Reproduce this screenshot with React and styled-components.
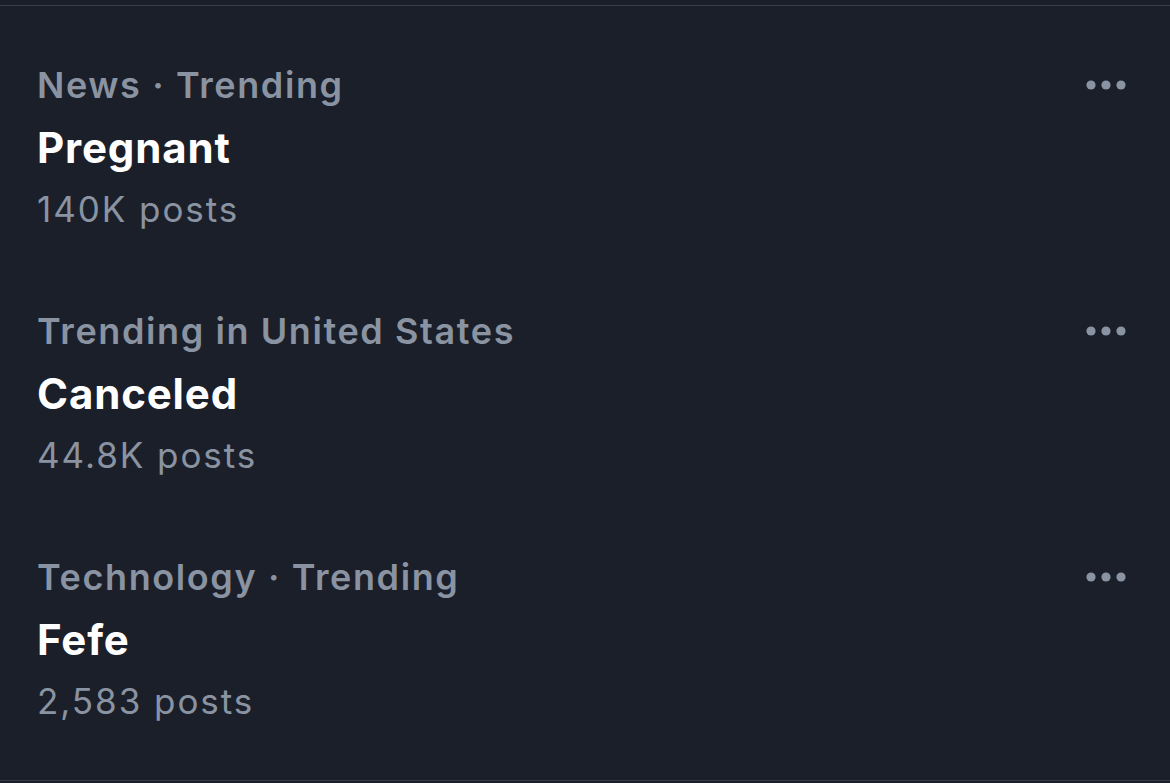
import styled, { createGlobalStyle } from 'styled-components';

const GlobalStyle = createGlobalStyle`
  html, body {
    margin: 0;
    padding: 0;
    background: #1a1f29;
  }
  body {
    font-family: Inter, "Noto Sans", "Liberation Sans", sans-serif;
    -webkit-font-smoothing: antialiased;
  }
`;

const Panel = styled.section`
  width: 1170px;
  height: 783px;
  box-sizing: border-box;
  padding-top: 5px;
  background: #1a1f29;
  display: flex;
  flex-direction: column;
`;

const List = styled.div`
  flex: 1;
  border-top: 1px solid #363c48;
  border-bottom: 1px solid #363c48;
  margin-bottom: 2px;
`;

const Item = styled.div`
  display: flex;
  justify-content: space-between;
  align-items: flex-start;
  padding: 57px 40px 21px 37px;
`;

const Info = styled.div`
  display: flex;
  flex-direction: column;
`;

const Category = styled.div`
  font-size: 36px;
  line-height: 44px;
  font-weight: 600;
  color: #8a93a2;
  letter-spacing: 1.6px;
`;

const Title = styled.div`
  margin-top: 16px;
  font-size: 42px;
  line-height: 50px;
  font-weight: 700;
  color: #ffffff;
  letter-spacing: 0.85px;
`;

const Count = styled.div`
  margin-top: 14px;
  font-size: 35px;
  line-height: 44px;
  font-weight: 400;
  color: #8a93a2;
  letter-spacing: 1.95px;
`;

const MoreButton = styled.button`
  display: flex;
  align-items: center;
  height: 44px;
  padding: 0;
  margin-right: 2px;
  border: none;
  background: none;
  cursor: pointer;
`;

const trends = [
  { category: 'News · Trending', title: 'Pregnant', posts: '140K posts' },
  { category: 'Trending in United States', title: 'Canceled', posts: '44.8K posts' },
  { category: 'Technology · Trending', title: 'Fefe', posts: '2,583 posts' },
];

function Dots() {
  return (
    <svg width="42" height="10" viewBox="0 0 42 10">
      <circle cx="5" cy="5" r="4.6" fill="#8a93a2" />
      <circle cx="20" cy="5" r="4.6" fill="#8a93a2" />
      <circle cx="35" cy="5" r="4.6" fill="#8a93a2" />
    </svg>
  );
}

export default function App() {
  return (
    <>
      <GlobalStyle />
      <Panel>
        <List>
          {trends.map((t) => (
            <Item key={t.title}>
              <Info>
                <Category>{t.category}</Category>
                <Title>{t.title}</Title>
                <Count>{t.posts}</Count>
              </Info>
              <MoreButton aria-label="More">
                <Dots />
              </MoreButton>
            </Item>
          ))}
        </List>
      </Panel>
    </>
  );
}
